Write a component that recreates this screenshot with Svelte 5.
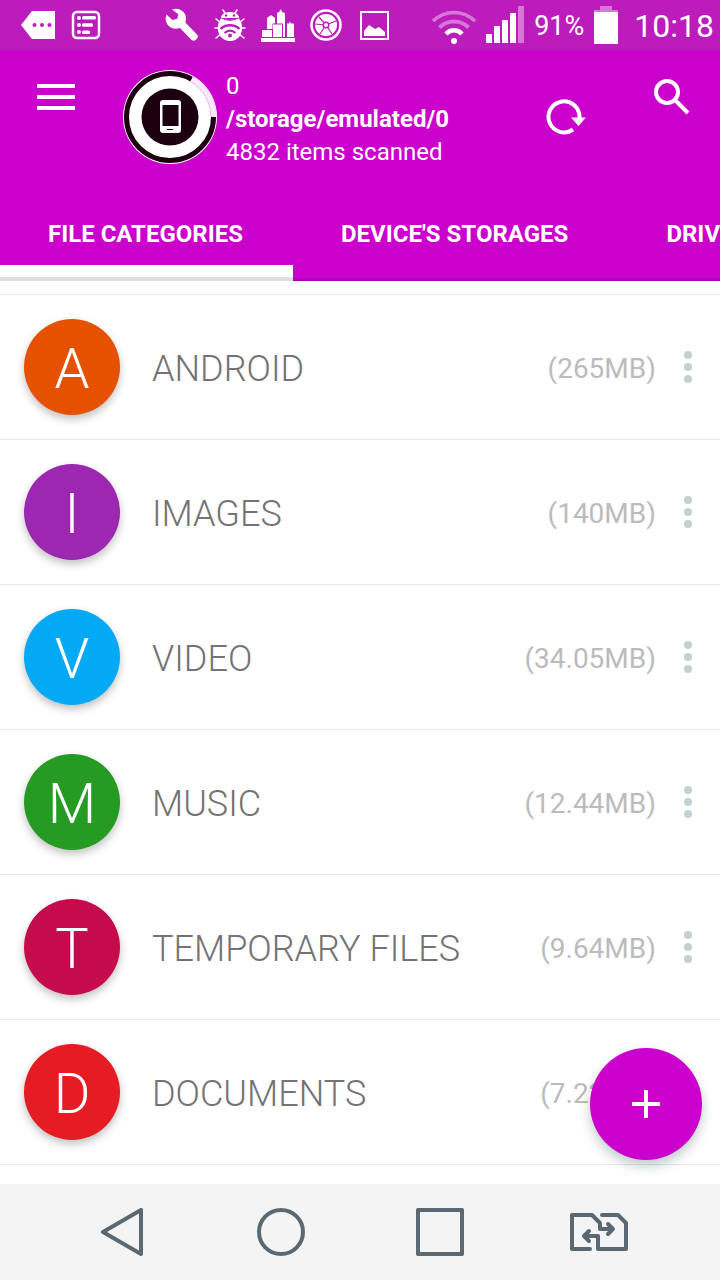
<script>
  const tabs = ['File categories', "Device's storages", 'Drives'];

  const categories = [
    { name: 'ANDROID', size: '265MB', color: '#e65100' },
    { name: 'IMAGES', size: '140MB', color: '#9c27b0' },
    { name: 'VIDEO', size: '34.05MB', color: '#03a9f4' },
    { name: 'MUSIC', size: '12.44MB', color: '#259b24' },
    { name: 'TEMPORARY FILES', size: '9.64MB', color: '#c60b4c' },
    { name: 'DOCUMENTS', size: '7.22MB', color: '#e51c23' },
  ];

  let activeTab = $state(0);
</script>

<div class="screen">
  <div class="status">
    <svg class="note" viewBox="0 0 48 50">
      <path fill="#fff" d="M7 25 18 11h23v28H18z" />
      <g fill="#bb1cbb"><circle cx="20.500" cy="25" r="2" /><circle cx="28" cy="25" r="2" /><circle cx="35.500" cy="25" r="2" /></g>
    </svg>
    <svg class="note" viewBox="0 0 48 50">
      <rect x="11" y="12" width="26" height="26" rx="4" fill="none" stroke="#fff" stroke-width="2.500" />
      <g fill="#fff">
        <circle cx="17" cy="18" r="2" /><circle cx="17" cy="25" r="2" /><circle cx="17" cy="32" r="2" />
        <rect x="20" y="16" width="14" height="3.500" rx="1.500" />
        <rect x="20" y="23.200" width="11" height="3.500" rx="1.500" />
        <rect x="20" y="30.400" width="8" height="3.500" rx="1.500" />
      </g>
    </svg>
    <svg class="note wrench" viewBox="0 0 48 50">
      <path fill="#fff" d="M14 9.500c5-2 10.500 0 13 4.500 1.500 3 1.300 6 .3 8.500L39 34.500c1.200 1.200 1.200 2.700 0 4l-1.500 1.500c-1.200 1-2.700 1-4 0L22 28c-4 1.500-8.500.7-11.500-2.300C7.600 22.800 7 18.500 8.500 14.500l6 5.500 4.800-1.200 1-4.500z" />
    </svg>
    <svg class="note" viewBox="0 0 48 50">
      <path d="M17 10l2.500 4M31 10l-2.500 4M10 19l5 4M38 19l-5 4M9 28h5M39 28h-5M10 38l5-4M38 38l-5-4" fill="none" stroke="#fff" stroke-width="1.500" stroke-linecap="round" />
      <path fill="#fff" d="M15 18c0-8 18-8 18 0z" />
      <path fill="#fff" d="M24 20c3.500 0 7-2 9-1.500 4 5 4 12 1 17.500-2.500 3-6 5-10 5s-7.500-2-10-5c-3-5.500-3-12.500 1-17.500 2-.5 5.500 1.500 9 1.500z" />
      <g fill="none" stroke="#bb1cbb">
        <path d="M16 18c4 3 12 3 16 0" stroke-width="1" />
        <path d="M14.500 29c5-5 14-5 19 0M18.500 33c3.500-3 7.500-3 11 0" stroke-width="2.300" />
      </g>
      <g fill="#bb1cbb"><circle cx="20" cy="15.500" r="1.200" /><circle cx="28" cy="15.500" r="1.200" /><circle cx="24" cy="35.500" r="2" /></g>
    </svg>
    <svg class="note" viewBox="0 0 48 50">
      <g fill="#fff">
        <path d="M7 38h34v4H7zM8 30h10v7H8zM13 18l4-3 4 3v5.500h-2.500V29H13zM23 13l2-1 2-3 1 3 3 1v24h-2V23.500h-6zM19 24.500h9V37h-9zM33 23.500h2l1-2 1 2h3V37h-7z" />
      </g>
    </svg>
    <svg class="note" viewBox="0 0 48 50">
      <circle cx="24" cy="25" r="14.500" fill="none" stroke="#fff" stroke-width="2.500" />
      <circle cx="24" cy="25" r="11" fill="#fff" />
      <path d="M24 25 17 17M24 25l10-4M24 25l6 9M24 25l-6 9M24 25l-11-1" stroke="#bb1cbb" stroke-width="1.200" />
      <circle cx="24" cy="25" r="3.500" fill="#bb1cbb" />
      <circle cx="24" cy="25" r="2" fill="#fff" />
    </svg>
    <svg class="note" viewBox="0 0 48 50">
      <rect x="11" y="12" width="27" height="27" fill="none" stroke="#fff" stroke-width="2" />
      <path fill="#fff" d="M14 36v-5l5-6 6 4 4-2 6 5v4z" />
    </svg>

    <div class="system">
      <svg width="44" height="50" viewBox="0 0 44 50">
        <g fill="none" stroke="#fff">
          <path d="M1 21c12-11.500 30-11.500 42 0" stroke-width="3.500" stroke-opacity=".4" />
          <path d="M7.500 27.500c8-8 21-8 29 0" stroke-width="4" stroke-opacity=".4" />
          <path d="M14 34c4.500-5 11.500-5 16 0" stroke-width="4.500" />
        </g>
        <circle cx="22" cy="41" r="3" fill="#fff" />
      </svg>
      <svg width="38" height="50" viewBox="0 0 38 50">
        <path fill="#fff" d="M0 34h6v9H0zM8 26h6v17H8zM16 20h6v23h-6zM24 13h6v30h-6z" />
        <path fill="#fff" fill-opacity=".4" d="M32 6h6v37h-6z" />
      </svg>
      <span class="percent">91%</span>
      <svg width="24" height="50" viewBox="0 0 24 50">
        <path fill="#fff" fill-opacity=".4" d="M6 6h12v4h6v2H0v-2h6z" />
        <path fill="#fff" d="M0 12h24v32H0z" />
      </svg>
      <span class="clock">10:18</span>
    </div>
  </div>

  <header>
    <div class="toolbar">
      <button class="menu" aria-label="Menu">
        <svg width="38" height="26" viewBox="0 0 38 26">
          <path fill="#fff" d="M0 0h38v4H0zM0 11h38v4H0zM0 22h38v4H0z" />
        </svg>
      </button>
      <svg class="disc" width="96" height="96" viewBox="0 0 96 96">
        <circle cx="48" cy="48" r="47" fill="#fff" />
        <circle cx="48" cy="48" r="43.500" fill="none" stroke="#1c0010" stroke-width="5" />
        <path d="M91.500 48A43.500 43.500 0 0 0 69.500 10.200" fill="none" stroke="#fbe9fb" stroke-width="6" />
        <path d="M89 48A41 41 0 0 0 68.500 12.500" fill="none" stroke="#e9bde9" stroke-width="1" />
        <circle cx="48" cy="48" r="28.500" fill="#1c0010" />
        <rect x="38" y="31" width="21" height="33" rx="3" fill="#fff" />
        <path fill="#1c0010" d="M40.500 36h16v21h-16zM45 60h6v1h-6z" />
      </svg>
      <div class="info">
        <span>0</span>
        <strong>/storage/emulated/0</strong>
        <span>4832 items scanned</span>
      </div>
      <button class="refresh" aria-label="Refresh">
        <svg width="48" height="48" viewBox="0 0 48 48">
          <path d="M32 36.500A15.500 15.500 0 1 1 38.500 24v2" fill="none" stroke="#fff" stroke-width="4" />
          <path fill="#fff" d="M30 24.500h15l-7.500 8.500z" />
        </svg>
      </button>
      <button class="search" aria-label="Search">
        <svg width="36" height="36" viewBox="0 0 36 36">
          <circle cx="13" cy="13" r="11" fill="none" stroke="#fff" stroke-width="4" />
          <path d="m22 22 12 12" stroke="#fff" stroke-width="4" />
        </svg>
      </button>
    </div>
    <div class="tabs" role="tablist">
      {#each tabs as tab, i}
        <button
          class="tab"
          class:active={i === activeTab}
          role="tab"
          aria-selected={i === activeTab}
          onclick={() => (activeTab = i)}
        >{tab}</button>
      {/each}
    </div>
  </header>

  <main>
    <ul>
      {#each categories as item}
        <li>
          <span class="avatar" style="background:{item.color}">{item.name[0]}</span>
          <span class="name">{item.name}</span>
          <span class="size">({item.size})</span>
          <button class="more" aria-label="Options for {item.name}">
            <svg width="8" height="32" viewBox="0 0 8 32">
              <g fill="#c3d0d0"><circle cx="4" cy="4" r="4" /><circle cx="4" cy="16" r="4" /><circle cx="4" cy="28" r="4" /></g>
            </svg>
          </button>
        </li>
      {/each}
    </ul>
    <button class="fab" aria-label="Add">
      <svg width="28" height="28" viewBox="0 0 28 28">
        <path fill="#fff" d="M12 0h4v12h12v4H16v12h-4V16H0v-4h12z" />
      </svg>
    </button>
  </main>

  <nav>
    <button aria-label="Back">
      <svg width="48" height="48" viewBox="0 0 48 48"><path d="M43 2v44L5 24z" /></svg>
    </button>
    <button aria-label="Home">
      <svg width="48" height="48" viewBox="0 0 48 48"><circle cx="24" cy="24" r="22" /></svg>
    </button>
    <button aria-label="Recent apps">
      <svg width="48" height="48" viewBox="0 0 48 48"><path d="M2 2h44v44H2z" /></svg>
    </button>
    <button aria-label="Switch SIM">
      <svg width="58" height="38" viewBox="0 0 58 38">
        <path d="M20 36H2V2h20l8 8v6h13M38 11l5 5-5 5M32 2h16l8 8v26H28V23H14M19 18l-5 5 5 5" />
      </svg>
    </button>
  </nav>
</div>

<style>
  :global(body) {
    margin: 0;
  }

  .screen {
    display: flex;
    flex-direction: column;
    min-height: 100vh;
    font-family: Roboto, 'Noto Sans', sans-serif;
    background: #fff;
    overflow-x: hidden;
  }

  button {
    display: flex;
    align-items: center;
    justify-content: center;
    padding: 0;
    border: 0;
    background: none;
    font: inherit;
    cursor: pointer;
  }

  svg {
    display: block;
    flex: none;
  }

  .status {
    display: flex;
    height: 50px;
    padding: 0 6px 0 14px;
    background: #bb1cbb;
    color: #fff;
  }

  .note {
    width: 48px;
    height: 50px;
  }

  .wrench {
    margin-left: 48px;
  }

  .system {
    display: flex;
    align-items: center;
    gap: 10px;
    margin-left: auto;
  }

  .percent {
    padding-top: 2px;
    font-size: 27px;
  }

  .clock {
    margin-left: 6px;
    padding-top: 2px;
    font-size: 32px;
  }

  header {
    background: linear-gradient(to top, #a300a3, #cc00cc 4px);
    color: #fff;
  }

  .toolbar {
    display: flex;
    align-items: center;
    height: 134px;
  }

  .menu,
  .search {
    align-self: flex-start;
    height: 94px;
  }

  .menu {
    width: 112px;
  }

  .search {
    width: 96px;
  }

  .disc {
    margin: 0 8px 0 10px;
  }

  .info {
    display: flex;
    flex: 1;
    flex-direction: column;
    padding-top: 4px;
    font-size: 24px;
    line-height: 33px;
    white-space: nowrap;
  }

  .refresh {
    width: 118px;
  }

  .tabs {
    display: flex;
    overflow: hidden;
  }

  .tab {
    position: relative;
    flex: none;
    height: 97px;
    padding: 2px 50px 0 48px;
    color: #fff;
    font-size: 24px;
    font-weight: 700;
    text-transform: uppercase;
  }

  .tab.active::after {
    content: '';
    position: absolute;
    right: 0;
    bottom: 0;
    left: 0;
    height: 12px;
    border-bottom: 4px solid #e0e0e0;
    background: #fff;
  }

  main {
    flex: 1;
    position: relative;
    padding: 13px 0 19px;
  }

  ul {
    margin: 0;
    padding: 0;
    border-top: 1px solid #e8e8e8;
    list-style: none;
  }

  li {
    display: flex;
    align-items: center;
    height: 144px;
    padding-left: 24px;
    border-bottom: 1px solid #e8e8e8;
  }

  .avatar {
    flex: none;
    width: 96px;
    height: 96px;
    margin-right: 32px;
    border-radius: 50%;
    box-shadow: 0 4px 8px rgba(0, 0, 0, 0.25);
    color: #fff;
    font-size: 56px;
    font-weight: 300;
    line-height: 101px;
    text-align: center;
  }

  .name {
    flex: 1;
    padding-top: 4px;
    color: #737373;
    font-size: 36px;
    font-weight: 300;
  }

  .size {
    padding-top: 2px;
    color: #bbb;
    font-size: 28px;
  }

  .more {
    width: 64px;
    height: 96px;
  }

  .fab {
    position: absolute;
    right: 18px;
    bottom: 24px;
    width: 112px;
    height: 112px;
    border-radius: 50%;
    background: #cc00cc;
    box-shadow: 0 6px 12px rgba(0, 50, 50, 0.25);
  }

  nav {
    display: flex;
    height: 96px;
    padding: 0 42px;
    background: #f4f4f4;
  }

  nav button {
    flex: 1;
  }

  nav svg {
    fill: none;
    stroke: #5a6872;
    stroke-width: 4;
    stroke-linecap: round;
    stroke-linejoin: round;
  }
</style>
